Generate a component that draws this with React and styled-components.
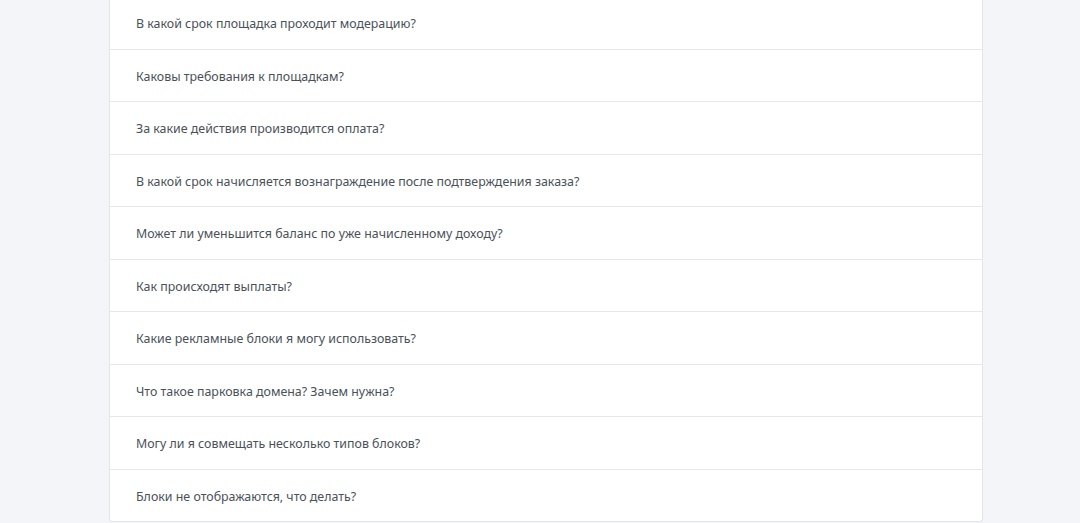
import React from "react";
import styled, { createGlobalStyle } from "styled-components";

const Global = createGlobalStyle`
  html, body { margin: 0; padding: 0; background: #f4f5f9; }
  body { font-family: "Noto Sans", "Open Sans", sans-serif; }
`;

const Page = styled.div`
  padding-left: 109px;
  width: 874px;
  margin-top: -3px;
`;

const Card = styled.div`
  background: #fff;
  border: 1px solid #e3e5ea;
  border-top: none;
  border-radius: 0 0 3px 3px;
  box-sizing: border-box;
`;

const Row = styled.div`
  padding: 17px 26px 15px;
  font-size: 12.4px;
  line-height: 19.5px;
  color: #4a5159;
  border-bottom: ${(p) => (p.$last ? "none" : "1px solid #e6e8ec")};
`;

const items = [
  "В какой срок площадка проходит модерацию?",
  "Каковы требования к площадкам?",
  "За какие действия производится оплата?",
  "В какой срок начисляется вознаграждение после подтверждения заказа?",
  "Может ли уменьшится баланс по уже начисленному доходу?",
  "Как происходят выплаты?",
  "Какие рекламные блоки я могу использовать?",
  "Что такое парковка домена? Зачем нужна?",
  "Могу ли я совмещать несколько типов блоков?",
  "Блоки не отображаются, что делать?",
];

export default function App() {
  return (
    <>
      <Global />
      <Page>
        <Card>
          {items.map((t, i) => (
            <Row key={i} $last={i === items.length - 1}>{t}</Row>
          ))}
        </Card>
      </Page>
    </>
  );
}
